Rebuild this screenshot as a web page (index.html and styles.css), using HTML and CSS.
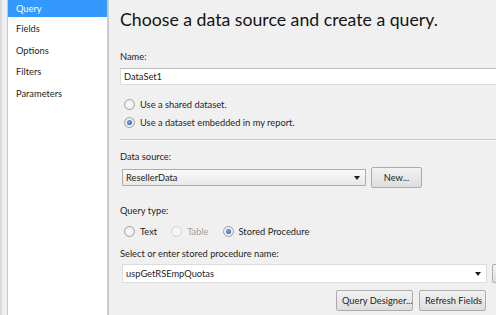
FILE: index.html
```html
<!DOCTYPE html>
<html lang="en">
<head>
    <meta charset="UTF-8">
    <title>Dataset Properties</title>
    <link rel="stylesheet" href="styles.css">
</head>
<body>
    <div class="window">
        <ul class="side_nav">
            <li class="active">Query</li>
            <li>Fields</li>
            <li>Options</li>
            <li>Filters</li>
            <li>Parameters</li>
        </ul>
        <section class="main_container">
            <h1 class="title">Choose a data source and create a query.</h1>

            <label class="field_label name_label">Name:</label>
            <div class="textbox name_box">DataSet1</div>

            <div class="radio_group">
                <div class="radio_row"><span class="radio"></span>Use a shared dataset.</div>
                <div class="radio_row"><span class="radio checked"></span>Use a dataset embedded in my report.</div>
            </div>

            <hr class="divider">

            <label class="field_label source_label">Data source:</label>
            <div class="source_row">
                <div class="combo source_combo"><span>ResellerData</span><span class="arrow"></span></div>
                <button class="btn new_btn">New...</button>
            </div>

            <label class="field_label type_label">Query type:</label>
            <div class="type_row">
                <div class="radio_row"><span class="radio"></span>Text</div>
                <div class="radio_row disabled"><span class="radio"></span>Table</div>
                <div class="radio_row"><span class="radio checked"></span>Stored Procedure</div>
            </div>

            <label class="field_label proc_label">Select or enter stored procedure name:</label>
            <div class="proc_row">
                <div class="combo proc_combo"><span>uspGetRSEmpQuotas</span><span class="arrow"></span></div>
                <button class="btn stub_btn"></button>
            </div>

            <div class="button_row">
                <button class="btn designer_btn">Query Designer...</button>
                <button class="btn refresh_btn">Refresh Fields</button>
            </div>
        </section>
    </div>
</body>
</html>
```

FILE: styles.css
```css
*{
    margin:0;
    padding:0;
    box-sizing:border-box;
}
body{
    width:496px;
    height:315px;
    overflow:hidden;
    background-color:rgb(240, 240, 240);
    font-family:Lato, sans-serif;
    font-size:9.3px;
    color:rgb(30, 30, 30);
}
.window{
    display:flex;
    height:315px;
    border-left:2px solid rgb(215, 218, 224);
}
.side_nav{
    width:102px;
    margin-left:5px;
    flex-shrink:0;
    background-color:#fff;
    border-left:1px solid rgb(200, 200, 200);
    border-right:2px solid rgb(200, 202, 208);
    list-style-type:none;
}
.side_nav li{
    height:21.5px;
    padding-left:8px;
    line-height:21.5px;
    font-size:9.3px;
}
.side_nav li.active{
    height:17px;
    margin-bottom:1px;
    line-height:17px;
    background-color:rgb(51, 153, 255);
    color:#fff;
}
.main_container{
    flex:1;
    padding:8px 0 0 11px;
    min-width:0;
}
.title{
    font-family:Lato, sans-serif;
    font-weight:normal;
    font-size:17.7px;
    line-height:24px;
    color:rgb(20, 20, 20);
    white-space:nowrap;
    margin-bottom:18px;
}
.field_label{
    display:block;
    height:16px;
    line-height:14px;
    white-space:nowrap;
}
.name_label{
    margin-bottom:2px;
}
.source_label{
    margin-bottom:1px;
}
.type_label{
    margin-top:16px;
}
.proc_label{
    margin-top:7px;
    margin-bottom:1px;
}
.textbox{
    height:17px;
    background-color:#fff;
    border:1px solid rgb(220, 220, 220);
    border-top-color:rgb(190, 190, 190);
    padding-left:3px;
    line-height:15px;
    width:400px;
}
.radio_group{
    padding:10px 0 0 4px;
}
.radio_row{
    display:flex;
    align-items:center;
    height:18px;
    white-space:nowrap;
}
.radio{
    width:11px;
    height:11px;
    border-radius:50%;
    border:1px solid rgb(160, 160, 160);
    background:radial-gradient(circle, #fff 0%, rgb(225, 225, 225) 100%);
    margin-right:5px;
    position:relative;
}
.radio.checked::after{
    content:"";
    position:absolute;
    left:2px;
    top:2px;
    width:5px;
    height:5px;
    border-radius:50%;
    background:radial-gradient(circle at 40% 40%, rgb(110, 180, 240), rgb(20, 70, 150));
}
.divider{
    border:none;
    border-top:1px solid rgb(200, 200, 200);
    border-bottom:1px solid #fff;
    margin:8px 0 9px 0;
    width:400px;
}
.source_row{
    display:flex;
    align-items:center;
    gap:5px;
    margin-left:2px;
}
.combo{
    height:17px;
    flex-shrink:0;
    background-color:#fff;
    border:1px solid rgb(170, 170, 170);
    display:flex;
    justify-content:space-between;
    align-items:center;
    padding:0 5px 0 3px;
}
.source_combo{
    width:244px;
    background:linear-gradient(rgb(250, 250, 250), rgb(232, 232, 232));
    border-color:rgb(172, 172, 172);
}
.arrow{
    width:0;
    height:0;
    border-left:3px solid transparent;
    border-right:3px solid transparent;
    border-top:4px solid rgb(30, 30, 30);
}
.btn{
    font-family:Lato, sans-serif;
    font-size:9.3px;
    color:rgb(30, 30, 30);
    height:21px;
    padding:0 5px;
    white-space:nowrap;
    flex-shrink:0;
    border:1px solid rgb(172, 172, 172);
    border-radius:2px;
    background:linear-gradient(rgb(242, 242, 242), rgb(222, 222, 222));
}
.new_btn{
    width:51px;
}
.type_row{
    display:flex;
    gap:14px;
    padding-left:4px;
    margin-top:2px;
}
.radio_row.disabled{
    color:rgb(160, 160, 160);
}
.radio_row.disabled .radio{
    border-color:rgb(210, 210, 210);
    background:rgb(245, 245, 245);
}
.proc_row{
    display:flex;
    align-items:center;
    gap:5px;
    margin-left:2px;
}
.proc_combo{
    width:365px;
    height:19px;
    border-color:rgb(220, 220, 220);
}
.stub_btn{
    width:20px;
    height:19px;
}
.button_row{
    display:flex;
    gap:6px;
    padding-left:216px;
    margin-top:7px;
}
.designer_btn{
    width:77px;
}
.refresh_btn{
    width:67px;
}
```
